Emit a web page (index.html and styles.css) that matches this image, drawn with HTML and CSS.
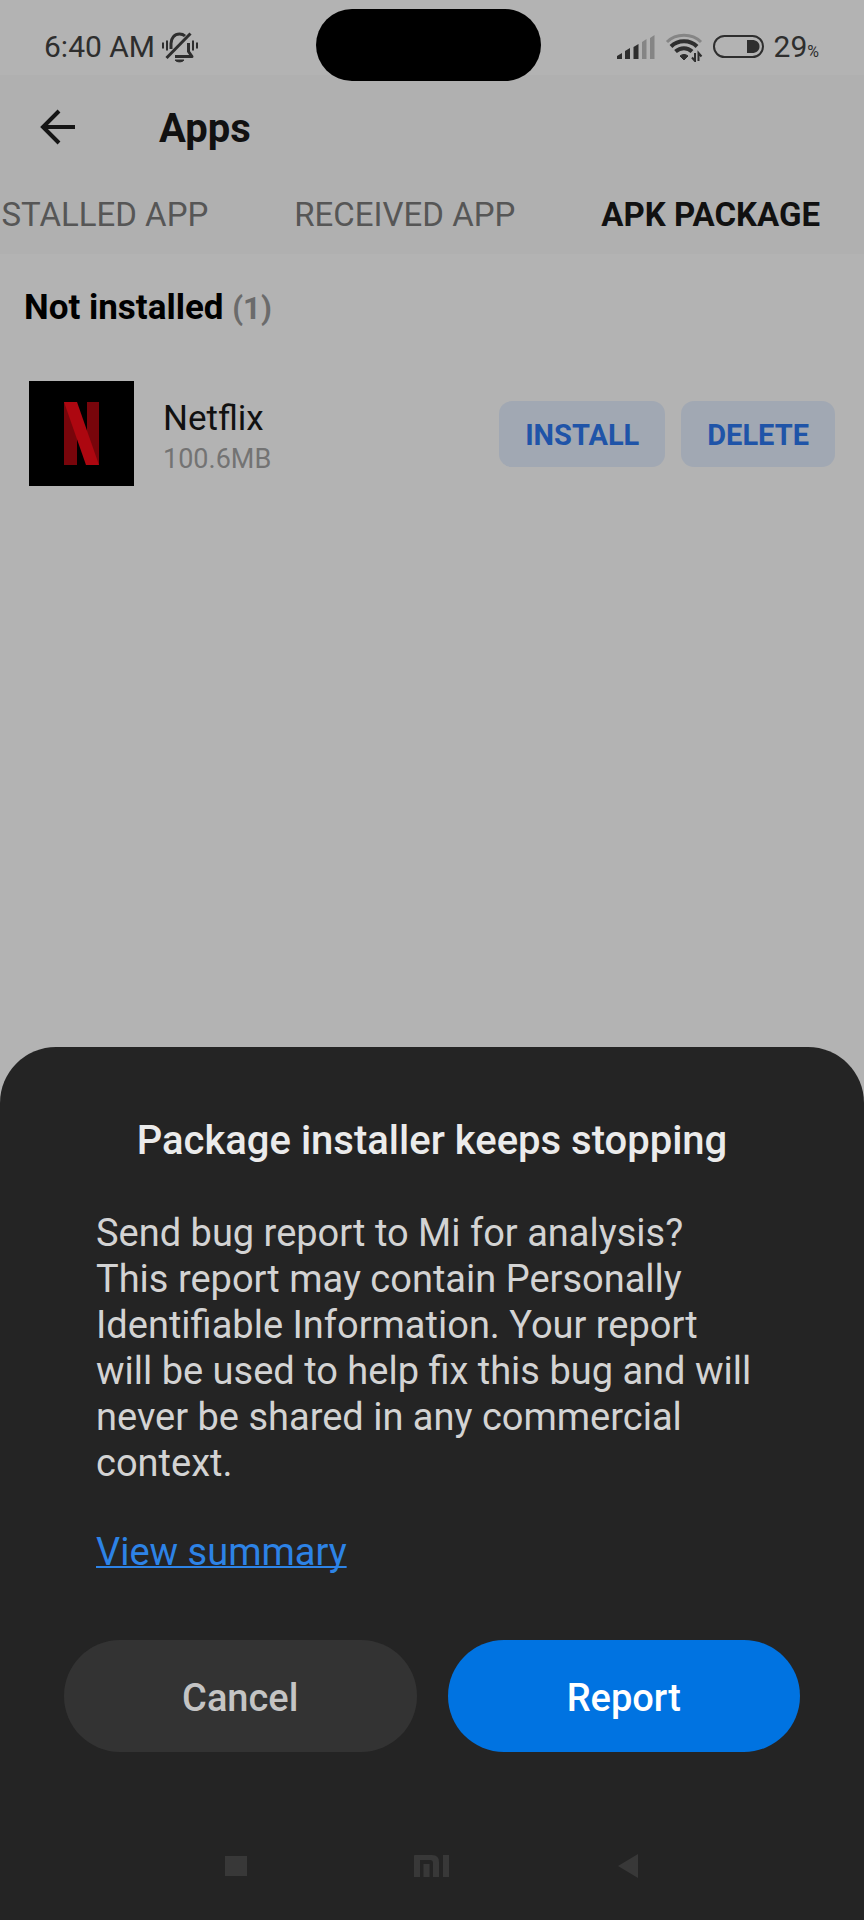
FILE: index.html
```
<!DOCTYPE html>
<html lang="en">

<head>
    <meta charset="UTF-8">
    <meta name="viewport" content="width=device-width, initial-scale=1.0">
    <title>Apps</title>
    <link rel="stylesheet" href="styles.css">
</head>

<body>
    <div class="status-bar">
        <div class="status-left">
            <span>6:40 AM</span>
            <svg class="icon-mute" width="38" height="32" viewBox="0 0 38 32" fill="none" stroke="#2e2e2e" stroke-width="3">
                <path d="M10 18V12.500C10 7 13.500 3 18.500 3C20.700 3 22.500 3.600 24 5" />
                <path d="M14 25.500H31L27.500 20.500V12" stroke-linejoin="round" />
                <path d="M5.500 27L29.500 2.500" />
                <path d="M14 29H23C21.500 31.500 15.500 31.500 14 29Z" fill="#2e2e2e" stroke-width="1" />
                <path d="M2 11.500V17.500M6 9.500V19.500M32 9.500V19.500M36 11.500V17.500" stroke-width="2" />
            </svg>
        </div>
        <div class="camera"></div>
        <div class="status-right">
            <svg class="icon-signal" width="38" height="26" viewBox="0 0 38 26" fill="#2e2e2e">
                <path d="M0 25V22L5 19V25ZM8 25V17L13 14V25ZM16.500 25V13L21.500 10V25Z" />
                <path d="M25 25V8L29.500 5V25ZM33 25V4L37.500 1V25Z" fill="#858585" />
            </svg>
            <svg class="icon-wifi" width="38" height="30" viewBox="0 0 38 30" fill="none" stroke="#2e2e2e" stroke-width="4">
                <path d="M2 10C11 1 27 1 36 10" stroke="#858585" stroke-width="3" />
                <path d="M6 14.500C13 7.500 25 7.500 32 14.500" />
                <path d="M10.500 19.500C15.500 15 22.500 15 27 19.500" />
                <path d="M15 24C17.500 22 20.500 22 23 24L19 28Z" fill="#2e2e2e" stroke-width="1" />
                <path d="M30 21V29L27 25.500M33.500 29V21L36.500 24.500" stroke-width="2" />
            </svg>
            <svg class="icon-battery" width="51" height="24" viewBox="0 0 51 24">
                <rect x="1" y="1" width="49" height="21" rx="10.500" fill="none" stroke="#2e2e2e" stroke-width="2" />
                <path d="M34 5H39C43.500 5 46.500 7.500 46.500 11.500S43.500 18 39 18H34Z" fill="#2e2e2e" />
            </svg>
            <span class="battery-level">29<small>%</small></span>
        </div>
    </div>

    <header class="app-header">
        <div class="title-row">
            <button class="back-button" aria-label="Back">
                <svg width="36" height="36" viewBox="0 0 36 36" fill="none" stroke="#151515" stroke-width="4">
                    <path d="M19 2L3 18L19 34M3 18H35" />
                </svg>
            </button>
            <h1>Apps</h1>
        </div>
        <nav class="tabs">
            <a href="#installed">STALLED APP</a>
            <a href="#received">RECEIVED APP</a>
            <a href="#apk" class="active">APK PACKAGE</a>
        </nav>
    </header>

    <main class="content">
        <h2>Not installed <span class="count">(1)</span></h2>
        <div class="app-row">
            <svg class="app-icon" width="105" height="105" viewBox="0 0 105 105">
                <rect width="105" height="105" fill="#000" />
                <path d="M35 21H48V84L35 84ZM58 21H70V84H58Z" fill="#78050b" />
                <path d="M35 21H48L70 84H57Z" fill="#ad0710" />
            </svg>
            <div class="app-info">
                <div class="app-name">Netflix</div>
                <div class="app-size">100.6MB</div>
            </div>
            <div class="app-actions">
                <button>INSTALL</button>
                <button>DELETE</button>
            </div>
        </div>
    </main>

    <section class="sheet" role="dialog" aria-labelledby="sheet-title">
        <h2 id="sheet-title">Package installer keeps stopping</h2>
        <div class="sheet-text">
            <p>Send bug report to Mi for analysis?<br>This report may contain Personally Identifiable Information. Your report will be used to help fix this bug and will never be shared in any commercial context.</p>
            <a href="#summary">View summary</a>
        </div>
        <div class="sheet-buttons">
            <button class="cancel">Cancel</button>
            <button class="report">Report</button>
        </div>
        <div class="nav-bar">
            <button aria-label="Recent apps">
                <svg width="22" height="20" viewBox="0 0 22 20"><rect width="22" height="20" fill="#383838" /></svg>
            </button>
            <button aria-label="Home">
                <svg width="36" height="22" viewBox="0 0 36 22" fill="#383838">
                    <path d="M0 22V1Q0 0 1 0H18Q25 0 25 7V22H19V8Q19 5 16 5H6V22ZM9.500 9H15.500V22H9.500ZM29 0H35V22H29Z" />
                </svg>
            </button>
            <button aria-label="Back">
                <svg width="20" height="24" viewBox="0 0 20 24"><path d="M0 12L20 0V24Z" fill="#383838" /></svg>
            </button>
        </div>
    </section>
</body>

</html>
```
FILE: styles.css
```
* {
    box-sizing: border-box;
}

body {
    margin: 0;
    min-height: 100vh;
    display: flex;
    flex-direction: column;
    font-family: Roboto, "Liberation Sans", sans-serif;
    background-color: #b3b3b3;
    color: #111;
    overflow-x: hidden;
}

h1,
h2,
p {
    margin: 0;
}

button {
    font-family: inherit;
    border: none;
    padding: 0;
    background: none;
    cursor: pointer;
}

svg {
    display: block;
}

/* status bar */
.status-bar {
    position: relative;
    height: 75px;
    padding: 18px 45px 0 44px;
    display: flex;
    justify-content: space-between;
    align-items: center;
    font-size: 30px;
    color: #2e2e2e;
}

.status-left,
.status-right {
    display: flex;
    align-items: center;
}

.status-left {
    gap: 6px;
}

.status-right {
    gap: 10px;
}

.battery-level small {
    font-size: 16px;
}

.camera {
    position: absolute;
    top: 9px;
    left: calc(50% - 116px);
    width: 225px;
    height: 72px;
    border-radius: 36px;
    background-color: #000;
}

/* header */
.app-header {
    background-color: #b0b0b0;
    padding-bottom: 5px;
}

.title-row {
    height: 104px;
    display: flex;
    align-items: center;
    padding-left: 40px;
    gap: 83px;
}

.title-row h1 {
    padding-top: 3px;
    font-size: 40px;
    font-weight: 700;
}

.tabs {
    height: 70px;
    display: flex;
    justify-content: flex-end;
    align-items: center;
    gap: 86px;
    padding-right: 44px;
    overflow: hidden;
    white-space: nowrap;
    font-size: 33px;
}

.tabs a {
    color: #565656;
    text-decoration: none;
}

.tabs .active {
    color: #111;
    font-weight: 700;
}

/* app list */
.content {
    flex: 1;
    padding: 33px 29px 0 24px;
}

.content h2 {
    font-size: 35px;
    line-height: 42px;
    font-weight: 700;
    color: #000;
}

.content .count {
    color: #6b6b6b;
    font-size: 31px;
    line-height: 31px;
}

.app-row {
    display: flex;
    align-items: center;
    margin-top: 52px;
    padding-left: 5px;
}

.app-info {
    flex: 1;
    padding: 8px 0 0 29px;
}

.app-name {
    font-size: 35px;
    line-height: 42px;
}

.app-size {
    font-size: 27px;
    line-height: 38px;
    color: #737373;
}

.app-actions {
    display: flex;
    gap: 16px;
}

.app-actions button {
    height: 66px;
    padding: 3px 26px 0;
    border-radius: 13px;
    background-color: #a1a8b3;
    color: #1f54a8;
    font-size: 29px;
    font-weight: 700;
}

/* crash dialog */
.sheet {
    padding-top: 71px;
    border-radius: 56px 56px 0 0;
    background-color: #242424;
}

.sheet h2 {
    font-size: 40px;
    line-height: 46px;
    font-weight: 500;
    text-align: center;
    color: #ebebeb;
}

.sheet-text {
    margin-top: 46px;
    padding: 0 104px 0 96px;
    font-size: 38px;
    line-height: 46px;
    color: #d3d3d3;
}

.sheet-text p {
    margin-bottom: 43px;
}

.sheet-text a {
    color: #2d83e6;
    text-decoration-thickness: 2px;
    text-decoration-skip-ink: none;
}

.sheet-buttons {
    display: flex;
    gap: 31px;
    margin-top: 65px;
    padding: 0 64px;
}

.sheet-buttons button {
    flex: 1;
    height: 112px;
    padding-top: 3px;
    border-radius: 56px;
    font-size: 38px;
    font-weight: 500;
}

.sheet-buttons .cancel {
    background-color: #333;
    color: #c4c4c4;
}

.sheet-buttons .report {
    background-color: #0073e1;
    color: #fff;
}

/* navigation keys */
.nav-bar {
    display: grid;
    grid-template-columns: repeat(3, 1fr);
    justify-items: center;
    align-items: center;
    height: 108px;
    margin-top: 60px;
    padding: 0 16%;
}
```
